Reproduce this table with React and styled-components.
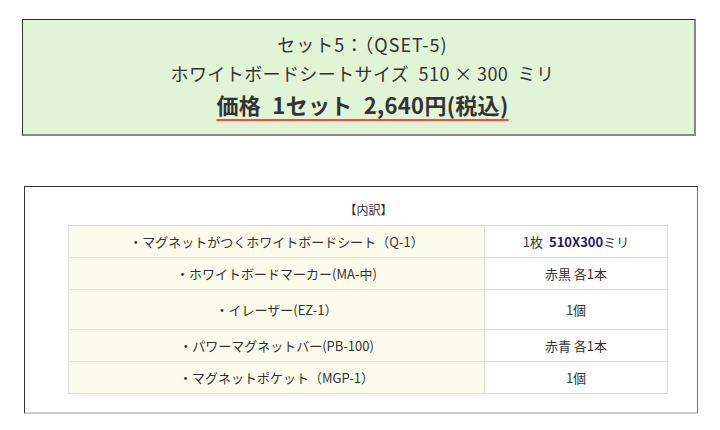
import React from 'react'
import styled, { createGlobalStyle } from 'styled-components'

const GlobalStyle = createGlobalStyle`
  body {
    margin: 0;
    background: #fff;
    font-family: "Noto Sans CJK JP", "Liberation Sans", sans-serif;
    color: #333;
  }
`

const Page = styled.div`
  width: 720px;
  padding-top: 19px;
`

const PriceBox = styled.div`
  margin-left: 22px;
  width: 674px;
  box-sizing: border-box;
  background: #e2f4d6;
  border-top: 1px solid #333;
  border-left: 1px solid #333;
  border-right: 2px solid #888;
  border-bottom: 2px solid #888;
  padding: 10px 0 14px 8px;
  text-align: center;
`

const Line = styled.div`
  font-size: ${p => p.size || 18}px;
  line-height: ${p => p.lh || 29}px;
  font-weight: ${p => (p.bold ? 700 : 400)};
  letter-spacing: ${p => p.spacing || 0}px;
  white-space: pre;
  color: #333;
`

const Underlined = styled.span`
  text-decoration: underline;
  text-decoration-color: #f44a4a;
  text-decoration-thickness: 2px;
  text-underline-offset: 5px;
`

const DetailBox = styled.div`
  margin: 50px 0 0 24px;
  width: 674px;
  box-sizing: border-box;
  border-top: 1px solid #333;
  border-left: 1px solid #333;
  border-right: 1px solid #777;
  border-bottom: 2px solid #ccc;
  padding: 13px 28px 18px 43px;
`

const Caption = styled.div`
  font-size: 12px;
  line-height: 20px;
  text-align: center;
  margin-bottom: 5px;
`

const Table = styled.table`
  width: 600px;
  border-collapse: collapse;
  font-size: 13px;
`

const Row = styled.tr`
  height: ${p => (p.tall ? 40 : 32)}px;
`

const Cell = styled.td`
  border: 1px solid #dedede;
  text-align: center;
  padding: 0;
  background: ${p => (p.item ? '#fcfcec' : '#fff')};
  width: ${p => (p.item ? '415px' : 'auto')};
`

const Size = styled.b`
  color: #2a1a5e;
  margin-left: 6px;
`

const rows = [
  { item: '・マグネットがつくホワイトボードシート（Q-1）', qty: <>1枚<Size>510X300</Size>ミリ</> },
  { item: '・ホワイトボードマーカー(MA-中)', qty: '赤黒 各1本' },
  { item: '・イレーザー(EZ-1）', qty: '1個', tall: true },
  { item: '・パワーマグネットバー(PB-100)', qty: '赤青 各1本' },
  { item: '・マグネットポケット（MGP-1）', qty: '1個' },
]

export default function App() {
  return (
    <Page>
      <GlobalStyle />
      <PriceBox>
        <Line spacing={1}>セット5：（QSET-5)</Line>
        <Line spacing={0.4}>{'ホワイトボードシートサイズ\u2002510 × 300\u2002ミリ'}</Line>
        <Line size={22} lh={32} bold spacing={0.3}>
          <Underlined>{'価格\u20021セット\u20022,640円(税込)'}</Underlined>
        </Line>
      </PriceBox>
      <DetailBox>
        <Caption>【内訳】</Caption>
        <Table>
          <tbody>
            {rows.map((r, i) => (
              <Row key={i} tall={r.tall}>
                <Cell item>{r.item}</Cell>
                <Cell>{r.qty}</Cell>
              </Row>
            ))}
          </tbody>
        </Table>
      </DetailBox>
    </Page>
  )
}
